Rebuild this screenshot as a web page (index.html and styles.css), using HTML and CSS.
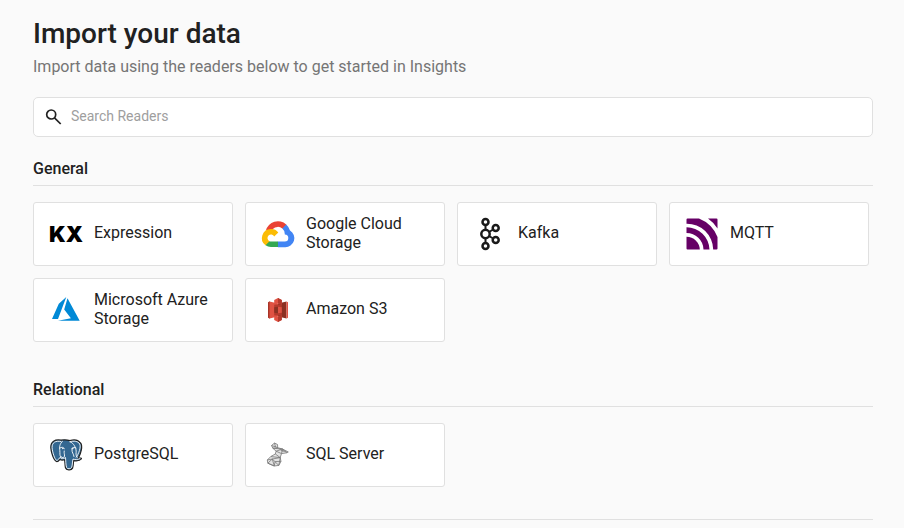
FILE: index.html
```html
<!DOCTYPE html>
<html lang="en">
<head>
<meta charset="utf-8">
<meta name="viewport" content="width=device-width, initial-scale=1">
<title>Import your data</title>
<link rel="stylesheet" href="styles.css">
</head>
<body>
<main class="page">
  <header class="intro">
    <h1 class="title">Import your data</h1>
    <p class="subtitle">Import data using the readers below to get started in Insights</p>
  </header>

  <label class="search">
    <svg class="search-icon" viewBox="0 0 18 18" aria-hidden="true"><circle cx="6.200" cy="6.500" r="4.500"/><path d="M9.500 9.800l6.200 6.200"/></svg>
    <input class="search-input" type="search" placeholder="Search Readers" aria-label="Search Readers">
  </label>

  <section class="group">
    <h2 class="group-title">General</h2>
    <div class="cards">
      <button class="card" type="button">
        <svg class="logo" viewBox="0 0 32 32" aria-hidden="true"><text class="kx" x="-1" y="24">KX</text></svg>
        <span class="name">Expression</span>
      </button>
      <button class="card" type="button">
        <svg class="logo" viewBox="0 0 32 32" aria-hidden="true">
          <path fill="#ea4335" d="M20.300 10.400h1l2.800-2.800.1-1.200A12.500 12.500 0 0 0 3.900 12.500c.3-.1 1-.1 1-.1l5.600-.9s.3-.5.400-.5a7 7 0 0 1 9.400-.6z"/>
          <path fill="#4285f4" d="M28 12.500a12.500 12.500 0 0 0-3.800-6.100l-3.900 4a7 7 0 0 1 2.500 5.500v.7a3.500 3.500 0 0 1 0 7H16l-.7.700v4.200l.7.700h6.900A9 9 0 0 0 28 12.500z"/>
          <path fill="#34a853" d="M9 29.100h7v-5.600H9a3.500 3.500 0 0 1-1.400-.3l-1 .3-2.800 2.800-.3 1A9 9 0 0 0 9 29.100z"/>
          <path fill="#fbbc05" d="M9 11.100a9 9 0 0 0-5.500 16.200l4.100-4.100a3.500 3.500 0 1 1 4.600-4.600l4.100-4.100A9 9 0 0 0 9 11.100z"/>
        </svg>
        <span class="name">Google Cloud Storage</span>
      </button>
      <button class="card" type="button">
        <svg class="logo" viewBox="0 0 32 32" aria-hidden="true">
          <g fill="none" stroke="#1a1a1a" stroke-width="2.500"><circle cx="11.500" cy="4" r="3"/><circle cx="11.500" cy="16" r="4.200"/><circle cx="11.500" cy="28" r="3"/><circle cx="21.700" cy="10" r="3"/><circle cx="21.700" cy="22" r="3"/><path stroke-width="2" d="M11.500 7v5M11.500 20v5M15 14l4.200-2.500M15 18l4.200 2.500"/></g>
        </svg>
        <span class="name">Kafka</span>
      </button>
      <button class="card" type="button">
        <svg class="logo" viewBox="0 0 32 32" aria-hidden="true">
          <g fill="#606"><path d="M.5 18.800A13.200 13.200 0 0 1 13.800 31.500H1.500a1 1 0 0 1-1-1z"/><path d="M.5 9.300v5.800A17 17 0 0 1 17.500 31.500h6A22.800 22.800 0 0 0 .5 9.300z"/><path d="M.5 1.500v4.200A26.200 26.200 0 0 1 27.200 31.500h3.300a1 1 0 0 0 1-1V19A33 33 0 0 0 13 .5H1.500a1 1 0 0 0-1 1z"/><path d="M22 .5h8.500a1 1 0 0 1 1 1v9A35 35 0 0 0 22 .5z"/></g>
        </svg>
        <span class="name">MQTT</span>
      </button>
      <button class="card" type="button">
        <svg class="logo" viewBox="0 0 32 32" aria-hidden="true">
          <path fill="#0089d6" d="M16.300 3 8.800 9.700 2 25h6zM17.500 4.200l-3.300 11.300 6.700 8.800L8 26.800h21.700z"/>
        </svg>
        <span class="name">Microsoft Azure Storage</span>
      </button>
      <button class="card" type="button">
        <svg class="logo" viewBox="0 0 32 32" aria-hidden="true">
          <path fill="#a83427" d="M6 8.300 8 7.300v17.400L6 23.700z"/><path fill="#e05243" d="M7.500 7.500L16 9.500v13l-8.500 2z"/><path fill="#8c3123" d="M16 9.500L24.500 7.500v17L16 22.500z"/><path fill="#e05243" d="M24.500 7.500 26 8.300v15.400l-1.500.8z"/>
          <path fill="#b5392c" d="M12.200 10.500h7.600v11h-7.600z"/>
          <path fill="#e05243" d="M16 4l3.800 1.900v4.600L16 9.600l-3.800.9V5.900zM12.200 21.500l3.800.9 3.800-.9v4.600L16 28l-3.800-1.900z"/>
          <path fill="#8c3123" d="M12.200 13.200l3.800-.5v6.600l-3.800-.5z"/><path fill="#e05243" d="M16 12.700l3.800.5v5.600l-3.800.5z"/>
          <path fill="#b5392c" d="M16 4l3.800 1.900v4.600L16 9.600zM16 22.400l3.800-.9v4.600L16 28z"/>
        </svg>
        <span class="name">Amazon S3</span>
      </button>
    </div>
  </section>

  <section class="group">
    <h2 class="group-title">Relational</h2>
    <div class="cards">
      <button class="card" type="button">
        <svg class="logo" viewBox="0 0 32 32" aria-hidden="true">
          <path fill="#336791" stroke="#222" stroke-width="1.200" d="M11 1.200C5 .2.700 2.500.8 8.500c.1 4 2.700 13 5.700 14 1.500.4 2.500-1 3.500-2.200.8.800 3.300.9 4.600.5.500 2.200.2 5 .9 8 .6 2.400 5.700 3 7.100.300.8-2 .7-5 1-7.400 2.500.4 6.300.1 7.700-1.700.6-1-.9-1.100-3-.800C31 14.500 33 7 30.500 4 28 .8 23.500.5 20 1.600 17 .7 14 .6 11 1.200z"/>
          <g fill="none" stroke="#fff" stroke-width=".9" stroke-linecap="round" stroke-linejoin="round"><path d="M11 2.500C5.500 1.400 2 3.500 2.100 8.500c.1 4 2.700 12.300 4.600 12.900 1 .2 2.500-2 4-3.700M12.500 2.300c-3 2.500-3.200 6-2.700 9.200.4 2.800-.5 5 1.300 6.500 1.200 1 3.300.6 3.400-.8.200-2-.7-2.900-.3-5.200M10 9c1.500-1.200 4-1 4.300.8M20 2.700c4 1.500 6 6.300 6.200 9.500.1 2.200-1 3.200 1 6.200M20 2.700c4-1 8-.7 9.700 2.300 1.500 3-1 10-3.500 13.200M21.700 9.500c1.200-1.300 3.300-1.200 4.300-.5M22 10c-.5 4 1.800 4.500 2 7.500M10.500 18.500c-1 1.500 3.500 1.500 5 0 .4 3.500.1 7 1.100 10 .7 1.700 4.300 1.700 5.100-.200.8-2.800.7-6 1.300-8.200 2 .7 5.300.4 7-.500"/></g><circle cx="12.800" cy="9.500" r=".7" fill="#fff"/><circle cx="22.800" cy="9.500" r=".7" fill="#fff"/>
        </svg>
        <span class="name">PostgreSQL</span>
      </button>
      <button class="card" type="button">
        <svg class="logo" viewBox="0 0 32 32" aria-hidden="true">
          <g fill="none" stroke="#777" stroke-width=".8" stroke-linejoin="round"><path fill="#e4e4e4" d="M9.500 6.500l3-2.500 3 1.500.2 3.200 4.800 1.300 5.800 3-1.500.8-5.300.8-1.300 4 .8 3.800-2.200 4-4.500.6-6.500-2.800-.5-3.200 3.500-3.500 4.500-2.500.8-2.800-3.300-3z"/><path d="M9.500 6.500l6 2 .2.500-4.900.200M12.500 4l1 4M10.800 9.200l9.700.8-6.400 2.200 5.400 2.400 1-4.600 4.300 3.800M13.300 15l5 3.600-8 1.400 6.500 6.400 1.500-7.800-9.500-1M5.300 21l5-1-4.500 4.200 6.400 2.800 1-4.500 5.800-.1M10.300 20l2 7"/></g>
          <path fill="#888" d="M16 9l10 4-6-.5z"/>
        </svg>
        <span class="name">SQL Server</span>
      </button>
    </div>
  </section>

  <hr class="divider">
</main>
</body>
</html>
```
FILE: styles.css
```css
* {
  box-sizing: border-box;
}

body {
  margin: 0;
  background: #fafafa;
  color: #212121;
  font-family: Roboto, "Liberation Sans", sans-serif;
  font-size: 16px;
}

.page {
  display: flex;
  flex-direction: column;
  padding: 16px 31px 8px 33px;
}

.title {
  margin: 0;
  font-size: 28px;
  line-height: 36px;
  font-weight: 500;
}

.subtitle {
  margin: 5px 0 20px;
  line-height: 20px;
  color: #757575;
}

.search {
  display: flex;
  align-items: center;
  gap: 8px;
  height: 40px;
  padding: 0 11px;
  margin-bottom: 20px;
  background: #fff;
  border: 1px solid #e0e0e0;
  border-radius: 5px;
}

.search-icon {
  width: 18px;
  height: 18px;
  flex: none;
  fill: none;
  stroke: #212121;
  stroke-width: 1.7;
}

.search-input {
  flex: 1;
  min-width: 0;
  padding: 0 0 2px;
  border: 0;
  outline: 0;
  background: none;
  color: #212121;
  font: inherit;
  font-size: 14px;
}

.search-input::placeholder {
  color: #9e9e9e;
}

.group + .group {
  margin-top: 36px;
}

.group-title {
  margin: 0 0 16px;
  padding-bottom: 4px;
  border-bottom: 1px solid #e0e0e0;
  font-size: 16px;
  line-height: 24px;
  font-weight: 500;
}

.cards {
  display: grid;
  grid-template-columns: repeat(auto-fill, 200px);
  gap: 12px;
}

.card {
  display: flex;
  align-items: center;
  gap: 12px;
  height: 64px;
  padding: 0 16px;
  background: #fff;
  border: 1px solid #e0e0e0;
  border-radius: 3px;
  color: #212121;
  font: inherit;
  text-align: left;
  cursor: pointer;
}

.logo {
  width: 32px;
  height: 32px;
  flex: none;
  overflow: visible;
}

.kx {
  font-family: Inter, Roboto, sans-serif;
  font-size: 22px;
  font-weight: 900;
  fill: #000;
}

.name {
  padding-bottom: 3px;
  line-height: 19px;
}

.divider {
  width: 100%;
  margin: 32px 0 0;
  border: 0;
  border-top: 1px solid #e0e0e0;
}
```
